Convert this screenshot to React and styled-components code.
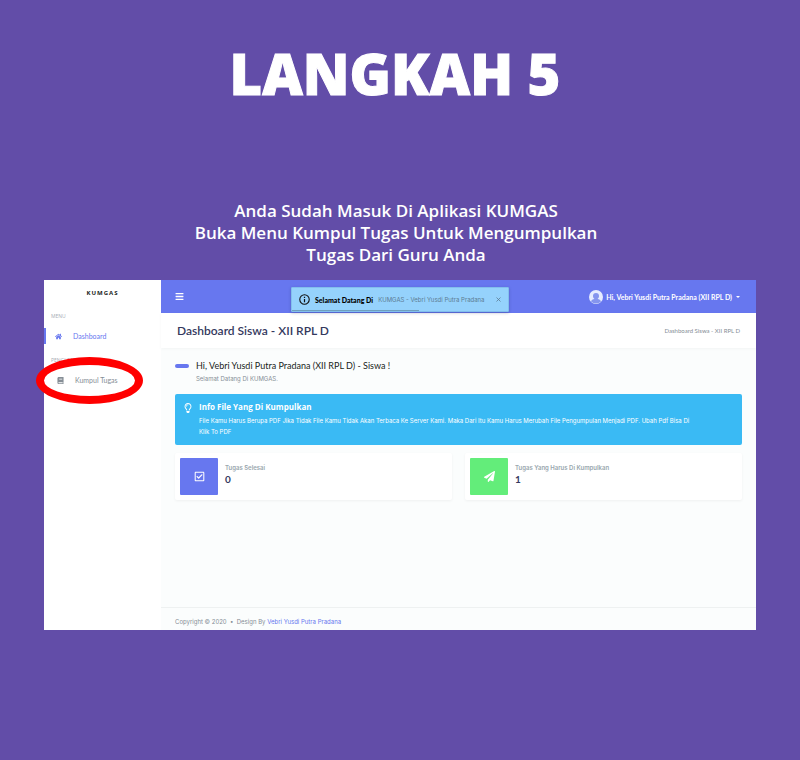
import React from 'react';
import styled, { createGlobalStyle, css } from 'styled-components';
import { FaHome, FaBook, FaBars, FaRegCheckSquare, FaPaperPlane, FaRegLightbulb } from 'react-icons/fa';

const GlobalStyle = createGlobalStyle`
  * { box-sizing: border-box; }
  body {
    margin: 0;
    background: #624da8;
    font-family: 'Open Sans', 'Noto Sans', sans-serif;
  }
  h1, h2, h3, p, ul { margin: 0; padding: 0; }
  ul { list-style: none; }
  a { text-decoration: none; color: inherit; }
  button { font: inherit; color: inherit; background: none; border: 0; padding: 0; cursor: pointer; }
`;

const appFont = css`
  font-family: Lato, 'Open Sans', sans-serif;
`;

const smallFont = css`
  font-family: Inter, 'Open Sans', sans-serif;
  font-size: 6px;
`;

const Page = styled.main`
  min-height: 100vh;
  padding: 36px 44px 48px;
`;

const Title = styled.h1`
  padding-right: 10px;
  color: #fff;
  font-size: 56px;
  line-height: 74px;
  font-weight: 800;
  -webkit-text-stroke: 1px #fff;
  text-align: center;
`;

const Lead = styled.p`
  margin: 90px 0 14px;
  padding-right: 8px;
  color: #fff;
  font-size: 17px;
  line-height: 22px;
  font-weight: 600;
  text-align: center;
`;

const Screen = styled.section`
  ${appFont}
  display: grid;
  grid-template-columns: 117px 1fr;
  min-height: 350px;
  background: #fbfdfd;
`;

const Sidebar = styled.aside`
  display: flex;
  flex-direction: column;
  background: #fff;
`;

const Brand = styled.a`
  padding-top: 8px;
  color: #191d21;
  font-family: 'Open Sans', 'Noto Sans', sans-serif;
  font-size: 6px;
  line-height: 11px;
  font-weight: 700;
  letter-spacing: 1px;
  text-align: center;
`;

const MenuHeading = styled.h3`
  margin-top: ${(p) => (p.$first ? '13px' : '12px')};
  padding-left: 7px;
  color: #a7adb5;
  font-family: 'Open Sans', 'Noto Sans', sans-serif;
  font-size: 5px;
  line-height: 8px;
  font-weight: 400;
  white-space: nowrap;
`;

const MenuItem = styled.li`
  position: relative;
  margin-top: 8px;
`;

const MenuLink = styled.a`
  display: flex;
  align-items: center;
  gap: 11px;
  height: 16px;
  padding-left: ${(p) => (p.$active ? '9px' : '13px')};
  border-left: ${(p) => (p.$active ? '2px solid #6777ef' : '0')};
  color: ${(p) => (p.$active ? '#6777ef' : '#868e96')};
  font-size: 7px;
  line-height: 10px;
`;

const Ring = styled.span`
  position: absolute;
  top: -15px;
  left: -8px;
  width: 107px;
  height: 47px;
  border: 8px solid #f00;
  border-radius: 50%;
  pointer-events: none;
`;

const Main = styled.div`
  position: relative;
  display: flex;
  flex-direction: column;
  min-width: 0;
`;

const TopBar = styled.header`
  display: flex;
  align-items: center;
  justify-content: space-between;
  height: 33px;
  padding: 0 16px 0 14px;
  background: #6777ef;
  color: #fff;
`;

const IconButton = styled.button`
  display: flex;
  font-size: 9px;
`;

const User = styled.button`
  display: flex;
  align-items: center;
  gap: 3px;
  font-size: 7px;
  line-height: 10px;
  font-weight: 700;
`;

const Caret = styled.span`
  margin-left: 1px;
  border: 2px solid transparent;
  border-top-color: #fff;
  border-bottom: 0;
`;

const Toast = styled.div`
  ${smallFont}
  position: absolute;
  top: 7px;
  left: 130px;
  display: flex;
  align-items: center;
  gap: 5px;
  width: 218px;
  height: 25px;
  padding: 0 7px 0 7px;
  border: 1px solid #82bfed;
  border-radius: 1px;
  background: #95d2fc;
  box-shadow: 0 1px 3px rgba(30, 40, 80, 0.3);
  color: #5c7c93;
  line-height: 10px;
  white-space: nowrap;

  &::after {
    content: '';
    position: absolute;
    bottom: 0;
    left: 0;
    width: 59%;
    height: 1px;
    background: #6f9fbd;
  }
`;

const ToastTitle = styled.strong`
  ${appFont}
  color: #000;
  font-size: 7px;
  font-weight: 900;
`;

const ToastClose = styled.button`
  display: flex;
  margin-left: auto;
`;

const PageHead = styled.div`
  display: flex;
  align-items: center;
  justify-content: space-between;
  height: 35px;
  padding: 0 16px;
  background: #fff;
  box-shadow: 0 1px 3px rgba(0, 0, 0, 0.04);
`;

const Heading = styled.h2`
  color: #34395e;
  font-size: 12px;
  line-height: 16px;
  font-weight: 600;
`;

const Crumb = styled.span`
  color: #868e96;
  font-size: 6px;
  line-height: 8px;
`;

const Content = styled.div`
  flex: 1;
  padding: 11px 14px 0;
`;

const Greeting = styled.div`
  display: grid;
  grid-template-columns: 14px 1fr;
  column-gap: 7px;
  align-items: center;

  &::before {
    content: '';
    height: 4px;
    border-radius: 2px;
    background: #6777ef;
  }
`;

const GreetingTitle = styled.h2`
  color: #191d21;
  font-size: 9px;
  line-height: 14px;
  font-weight: 400;
`;

const GreetingText = styled.p`
  ${smallFont}
  grid-column: 2;
  margin-top: 1px;
  color: #868e96;
  line-height: 10px;
`;

const Alert = styled.div`
  display: flex;
  gap: 6px;
  margin-top: 10px;
  padding: 7px 35px 8px 8px;
  border-radius: 2px;
  background: #3abaf4;
  color: #fff;
`;

const AlertIcon = styled.span`
  display: flex;
  padding-top: 2px;
  font-size: 10px;
`;

const AlertTitle = styled.h3`
  font-family: 'Open Sans', 'Noto Sans', sans-serif;
  font-size: 8px;
  line-height: 12px;
  font-weight: 700;
`;

const AlertText = styled.p`
  ${smallFont}
  margin-top: 2px;
  line-height: 11px;
`;

const Cards = styled.div`
  display: grid;
  grid-template-columns: 1fr 1fr;
  gap: 13px;
  margin-top: 8px;
`;

const Card = styled.article`
  display: flex;
  gap: 7px;
  padding: 5px;
  border-radius: 2px;
  background: #fff;
  box-shadow: 0 1px 3px rgba(0, 0, 0, 0.05);
`;

const CardIcon = styled.div`
  display: grid;
  place-items: center;
  width: 38px;
  height: 37px;
  border-radius: 1px;
  background: ${(p) => p.$color};
  color: #fff;
  font-size: 11px;
`;

const CardLabel = styled.h3`
  ${smallFont}
  padding-top: 5px;
  color: #98a6ad;
  line-height: 10px;
  font-weight: 600;
`;

const CardValue = styled.p`
  color: #34395e;
  font-size: 10px;
  line-height: 12px;
  font-weight: 700;
`;

const Footer = styled.footer`
  ${smallFont}
  height: 23px;
  padding: 8px 14px 0;
  border-top: 1px solid #eef1f1;
  color: #868e96;
  line-height: 12px;
`;

const FooterLink = styled.a`
  color: #6777ef;
`;

const InfoIcon = () => (
  <svg width="11" height="11" viewBox="0 0 20 20" fill="none" stroke="#111" strokeWidth="2" aria-hidden="true">
    <circle cx="10" cy="10" r="8.6" />
    <path d="M10 9v6M10 5v2.2" strokeWidth="2.2" />
  </svg>
);

const CloseIcon = () => (
  <svg width="5" height="5" viewBox="0 0 10 10" stroke="#5c7c93" strokeWidth="1.6" aria-hidden="true">
    <path d="M1 1l8 8M9 1l-8 8" />
  </svg>
);

const Avatar = () => (
  <svg width="14" height="14" viewBox="0 0 28 28" aria-hidden="true">
    <circle cx="14" cy="14" r="14" fill="#e6ecff" />
    <path d="M14 6a6 6 0 0 1 6 6c0 2.600-1.200 4.600-2.800 5.800 3.400.7 5.800 2.200 6.800 5.200a14 14 0 0 1-20 0c1-3 3.400-4.500 6.800-5.200C9.200 16.600 8 14.600 8 12a6 6 0 0 1 6-6z" fill="#8595ee" />
  </svg>
);

const cards = [
  { label: 'Tugas Selesai', value: '0', color: '#6777ef', Icon: FaRegCheckSquare },
  { label: 'Tugas Yang Harus Di Kumpulkan', value: '1', color: '#63ed7a', Icon: FaPaperPlane },
];

export default function App() {
  return (
    <>
      <GlobalStyle />
      <Page>
        <Title>LANGKAH 5</Title>
        <Lead>
          Anda Sudah Masuk Di Aplikasi KUMGAS
          <br />
          Buka Menu Kumpul Tugas Untuk Mengumpulkan
          <br />
          Tugas Dari Guru Anda
        </Lead>
        <Screen>
          <Sidebar>
            <Brand href="#">KUMGAS</Brand>
            <MenuHeading $first>MENU</MenuHeading>
            <ul>
              <MenuItem>
                <MenuLink href="#dashboard" $active>
                  <FaHome />
                  Dashboard
                </MenuLink>
              </MenuItem>
            </ul>
            <MenuHeading>PENGUMPULAN TUGAS</MenuHeading>
            <ul>
              <MenuItem>
                <MenuLink href="#kumpul">
                  <FaBook />
                  Kumpul Tugas
                </MenuLink>
                <Ring />
              </MenuItem>
            </ul>
          </Sidebar>
          <Main>
            <TopBar>
              <IconButton aria-label="Menu">
                <FaBars />
              </IconButton>
              <User>
                <Avatar />
                Hi, Vebri Yusdi Putra Pradana (XII RPL D)
                <Caret />
              </User>
            </TopBar>
            <Toast role="status">
              <InfoIcon />
              <ToastTitle>Selamat Datang Di</ToastTitle>
              <span>KUMGAS - Vebri Yusdi Putra Pradana</span>
              <ToastClose aria-label="Tutup">
                <CloseIcon />
              </ToastClose>
            </Toast>
            <PageHead>
              <Heading>Dashboard Siswa - XII RPL D</Heading>
              <Crumb>Dashboard Siswa - XII RPL D</Crumb>
            </PageHead>
            <Content>
              <Greeting>
                <GreetingTitle>Hi, Vebri Yusdi Putra Pradana (XII RPL D) - Siswa !</GreetingTitle>
                <GreetingText>Selamat Datang Di KUMGAS.</GreetingText>
              </Greeting>
              <Alert>
                <AlertIcon>
                  <FaRegLightbulb />
                </AlertIcon>
                <div>
                  <AlertTitle>Info File Yang Di Kumpulkan</AlertTitle>
                  <AlertText>
                    File Kamu Harus Berupa PDF Jika Tidak File Kamu Tidak Akan Terbaca Ke Server Kami. Maka Dari Itu
                    Kamu Harus Merubah File Pengumpulan Menjadi PDF. Ubah Pdf Bisa Di
                    <br />
                    Klik To PDF
                  </AlertText>
                </div>
              </Alert>
              <Cards>
                {cards.map(({ label, value, color, Icon }) => (
                  <Card key={label}>
                    <CardIcon $color={color}>
                      <Icon />
                    </CardIcon>
                    <div>
                      <CardLabel>{label}</CardLabel>
                      <CardValue>{value}</CardValue>
                    </div>
                  </Card>
                ))}
              </Cards>
            </Content>
            <Footer>
              Copyright © 2020 &nbsp;•&nbsp; Design By <FooterLink href="#author">Vebri Yusdi Putra Pradana</FooterLink>
            </Footer>
          </Main>
        </Screen>
      </Page>
    </>
  );
}
